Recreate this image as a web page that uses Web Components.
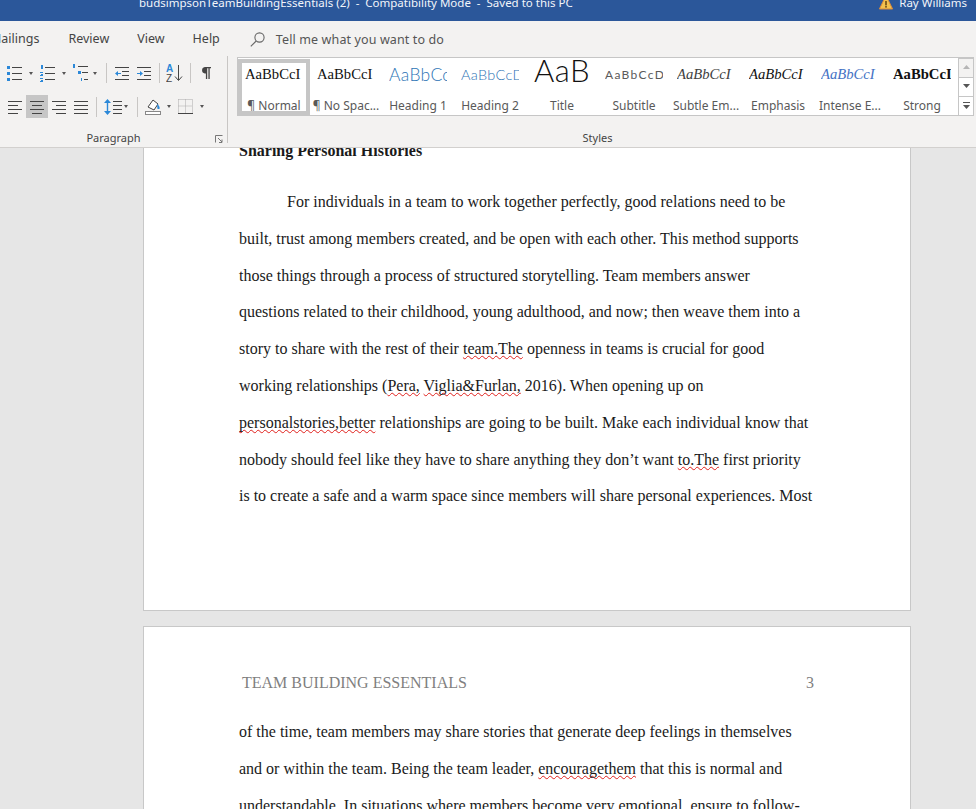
<!DOCTYPE html>
<html lang="en"><head><meta charset="utf-8"><title>Word</title>
<style>
html,body{margin:0;padding:0;height:100%;overflow:hidden;background:#e6e6e6}
word-app{font-family:"Noto Sans","Open Sans",sans-serif}
</style></head>
<body>
<template id="word-app-t"><style>
:host{display:flex;flex-direction:column;width:976px;height:809px;overflow:hidden}
</style><slot></slot></template>

<template id="title-bar-t"><style>
:host{display:flex;flex:none;height:21px;background:#2b579a;color:#f2f5fa;font-size:11.5px;line-height:16px;overflow:hidden;white-space:pre}
.t{margin:-5px 0 0 139px;flex:none}
.w{margin-left:auto;display:flex;flex:none;margin-top:-5px;padding-right:9px}
svg{margin:0 6px 0 0;flex:none}
</style><div class="t"><slot name="title"></slot></div><div class="w"><svg width="14" height="15" viewBox="0 0 14 15"><path d="M7 0.5 13.6 14H.4z" fill="#f2c14e" stroke="#d98a3a"/><rect x="6.2" y="6" width="1.6" height="4.4" fill="#6b4a12"/><rect x="6.2" y="11" width="1.6" height="1.6" fill="#6b4a12"/></svg><slot name="user"></slot></div></template>

<template id="ribbon-tabs-t"><style>
:host{display:flex;flex:none;height:35px;align-items:center;background:#f3f2f1;color:#444;font-size:12.5px;white-space:nowrap;overflow:hidden}
</style><slot></slot></template>

<template id="ribbon-tab-t"><style>
:host{display:block;flex:none;line-height:18px;padding-top:1px}
</style><slot></slot></template>

<template id="search-box-t"><style>
:host{display:flex;align-items:center;flex:none;color:#555;letter-spacing:.12px;padding-top:1px}
svg{margin-right:11px}
</style><svg width="15" height="15" viewBox="0 0 15 15" fill="none" stroke="#666" stroke-width="1.1"><circle cx="9.5" cy="5.5" r="4.6"/><path d="M6.2 9 .8 14.4"/></svg><slot></slot></template>

<template id="ribbon-bar-t"><style>
:host{display:flex;flex:none;height:91px;background:#f3f2f1;border-bottom:1px solid #d2d0ce;overflow:hidden}
</style><slot></slot></template>

<template id="paragraph-group-t"><style>
:host{display:flex;flex-direction:column;flex:none;width:227px;height:87px;padding-top:8px;box-sizing:content-box;border-right:1px solid #c8c6c4;height:79px;margin-bottom:4px;position:relative}
.r{display:flex;align-items:center}
.a{height:18px;padding-left:7px}.b{height:23px;margin-top:13px;padding-left:8px}
.l{display:flex;justify-content:center;margin-top:12px;font-size:11px;line-height:16px;color:#444;padding-right:24px;padding-left:24px;position:relative;height:16px;box-sizing:border-box;margin-bottom:-12px}
dialog-launcher{position:absolute;right:4px;top:5px}
</style><div class="r a"><slot name="a"></slot></div><div class="r b"><slot name="b"></slot></div><div class="l"><slot name="label"></slot><dialog-launcher></dialog-launcher></div></template>

<template id="dialog-launcher-t"><style>:host{display:block;width:8px;height:8px}svg{display:block}</style><svg width="8" height="8" viewBox="0 0 8 8" fill="none" stroke="#777"><path d="M.5 7.5V.5h7M3 3l4 4M7 4.5v3h-3"/></svg></template>

<template id="ribbon-tool-t"><style>
:host{display:flex;align-items:center;flex:none}
svg{display:block;flex:none}
:host([on]){background:#c6c6c6;width:22px;height:23px;justify-content:center}
.c{width:0;height:0;border:2.5px solid transparent;border-top:3px solid #555;border-bottom:0;flex:none}
</style><span id="i" style="display:contents"></span></template>

<template id="ribbon-sep-t"><style>:host{display:block;flex:none;width:1px;background:#c8c6c4}</style></template>

<template id="styles-group-t"><style>
:host{display:flex;flex-direction:column;flex:1;min-width:0;padding:1px 2px 0 9px}
.l{display:flex;justify-content:center;margin-top:14px;font-size:11px;line-height:16px;color:#444;padding-right:16px}
.g{display:flex;height:59px;background:#fff;border:1px solid #c6c6c6;box-sizing:border-box;padding-left:0}
.s{margin-left:auto;width:15px;display:flex;flex-direction:column;flex:none}
</style><div class="g"><slot name="tile"></slot><div class="s"><slot name="scroll"></slot></div></div><div class="l"><slot name="label"></slot></div></template>

<template id="style-tile-t"><style>
:host{display:flex;flex-direction:column;align-items:center;flex:none;width:72px;height:56px;box-sizing:border-box;margin-top:1px;overflow:hidden}
:host([selected]){border:4px solid #c6c6c6}
.p{width:58px;height:30px;overflow:hidden;white-space:nowrap;flex:none;display:flex;align-items:center;color:#111;font-family:"Liberation Serif",serif;font-size:14.67px;padding-top:1px;box-sizing:border-box}
:host([selected]) .p{margin-top:-4px}
.n{font-size:12px;line-height:16px;color:#595959;white-space:nowrap;margin-top:9px}
:host([selected]) .n{margin-top:9px}
::slotted(*){display:block}
</style><div class="p" part="p"><slot name="p"></slot></div><div class="n"><slot></slot></div></template>

<template id="gallery-scroll-t"><style>
:host{display:flex;flex:1;align-items:center;justify-content:center;border-left:1px solid #c6c6c6;background:#fff}
:host([disabled]){background:#f3f2f1}
:host(:not(:first-child)){border-top:1px solid #c6c6c6}
svg{display:block}
</style><span id="i" style="display:contents"></span></template>

<template id="doc-area-t"><style>
:host{display:flex;flex-direction:column;flex:1;min-height:0;overflow:hidden;background:#e6e6e6;padding-left:143px}
</style><slot></slot></template>

<template id="doc-page-t"><style>
:host{display:block;flex:none;box-sizing:border-box;width:768px;background:#fff;border:1px solid #c8c8c8;color:#1a1a1a;font:16px/36.8px "Liberation Serif",serif;padding-left:95px}
:host([first]){margin-top:-15px;padding-bottom:95px;border-top:0}
:host([second]){margin-top:15px;padding-top:38px}
</style><slot></slot></template>

<template id="doc-line-t"><style>
:host{display:block;white-space:nowrap;height:36.8px}
:host([h]){font-weight:700;margin-bottom:14.2px}
:host([i]){padding-left:48px}
</style><slot></slot></template>

<template id="page-head-t"><style>
:host{display:flex;justify-content:space-between;width:572px;margin-left:3px;color:#7f7f7f;line-height:36.8px;margin-bottom:12px}
</style><slot></slot></template>

<template id="spell-err-t"><style>
:host{display:inline;text-decoration:underline wavy #e0201c 1px;text-decoration-skip-ink:none;text-underline-offset:1px}
</style><slot></slot></template>

<word-app>
  <title-bar><span slot="title">budsimpsonTeamBuildingEssentials (2)  -  Compatibility Mode  -  Saved to this PC</span><span slot="user">Ray Williams</span></title-bar>
  <ribbon-tabs>
    <ribbon-tab style="margin-left:-10px">Mailings</ribbon-tab>
    <ribbon-tab style="margin-left:29px">Review</ribbon-tab>
    <ribbon-tab style="margin-left:28px">View</ribbon-tab>
    <ribbon-tab style="margin-left:28px">Help</ribbon-tab>
    <search-box style="margin-left:30px">Tell me what you want to do</search-box>
  </ribbon-tabs>
  <ribbon-bar>
    <paragraph-group>
      <ribbon-tool slot="a" icon="bullets" caret="7"></ribbon-tool>
      <ribbon-tool slot="a" icon="numbers" caret="7" style="margin-left:7px"></ribbon-tool>
      <ribbon-tool slot="a" icon="multi" caret="5" style="margin-left:7px"></ribbon-tool>
      <ribbon-sep slot="a" style="margin-left:9px;height:20px"></ribbon-sep>
      <ribbon-tool slot="a" icon="outdent" style="margin-left:8px"></ribbon-tool>
      <ribbon-tool slot="a" icon="indent" style="margin-left:8px"></ribbon-tool>
      <ribbon-sep slot="a" style="margin-left:8px;height:20px"></ribbon-sep>
      <ribbon-tool slot="a" icon="sort" style="margin-left:6px"></ribbon-tool>
      <ribbon-sep slot="a" style="margin-left:7px;height:20px"></ribbon-sep>
      <ribbon-tool slot="a" icon="pilcrow" style="margin-left:10px"></ribbon-tool>

      <ribbon-tool slot="b" icon="left"></ribbon-tool>
      <ribbon-tool slot="b" icon="center" on style="margin-left:4px"></ribbon-tool>
      <ribbon-tool slot="b" icon="right" style="margin-left:4px"></ribbon-tool>
      <ribbon-tool slot="b" icon="justify" style="margin-left:8px"></ribbon-tool>
      <ribbon-sep slot="b" style="margin-left:8px;height:20px"></ribbon-sep>
      <ribbon-tool slot="b" icon="spacing" caret="2" style="margin-left:7px"></ribbon-tool>
      <ribbon-sep slot="b" style="margin-left:9px;height:20px"></ribbon-sep>
      <ribbon-tool slot="b" icon="shade" caret="6" style="margin-left:7px"></ribbon-tool>
      <ribbon-tool slot="b" icon="borders" caret="7" style="margin-left:7px"></ribbon-tool>
      <span slot="label">Paragraph</span>
    </paragraph-group>
    <styles-group>
      <style-tile slot="tile" selected><span slot="p">AaBbCcI</span>¶ Normal</style-tile>
      <style-tile slot="tile"><span slot="p">AaBbCcI</span>¶ No Spac...</style-tile>
      <style-tile slot="tile"><span slot="p" style="font:300 17.5px Lato,sans-serif;color:#2e74b5;letter-spacing:.3px">AaBbCcD</span>Heading 1</style-tile>
      <style-tile slot="tile"><span slot="p" style="font:300 14.5px Lato,sans-serif;color:#2e74b5;letter-spacing:.3px">AaBbCcDd</span>Heading 2</style-tile>
      <style-tile slot="tile"><span slot="p" style="font:300 31px/30px Lato,sans-serif;color:#111;padding-left:1px;margin-top:-10px;letter-spacing:.5px">AaB</span>Title</style-tile>
      <style-tile slot="tile"><span slot="p" style="font:400 12px Lato,sans-serif;color:#5a5a5a;letter-spacing:1.3px">AaBbCcD</span>Subtitle</style-tile>
      <style-tile slot="tile"><span slot="p" style="font-style:italic;color:#404040">AaBbCcI</span>Subtle Em...</style-tile>
      <style-tile slot="tile"><span slot="p" style="font-style:italic;color:#111">AaBbCcI</span>Emphasis</style-tile>
      <style-tile slot="tile"><span slot="p" style="font-style:italic;color:#4472c4">AaBbCcI</span>Intense E...</style-tile>
      <style-tile slot="tile"><span slot="p" style="font-weight:700;color:#111">AaBbCcI</span>Strong</style-tile>
      <gallery-scroll slot="scroll" dir="up" disabled></gallery-scroll>
      <gallery-scroll slot="scroll" dir="down"></gallery-scroll>
      <gallery-scroll slot="scroll" dir="more"></gallery-scroll>
      <span slot="label">Styles</span>
    </styles-group>
  </ribbon-bar>
  <doc-area>
    <doc-page first>
      <doc-line h>Sharing Personal Histories</doc-line>
      <doc-line i>For individuals in a team to work together perfectly, good relations need to be</doc-line>
      <doc-line>built, trust among members created, and be open with each other. This method supports</doc-line>
      <doc-line>those things through a process of structured storytelling. Team members answer</doc-line>
      <doc-line>questions related to their childhood, young adulthood, and now; then weave them into a</doc-line>
      <doc-line>story to share with the rest of their <spell-err>team.The</spell-err> openness in teams is crucial for good</doc-line>
      <doc-line>working relationships (<spell-err>Pera,</spell-err> <spell-err>Viglia&amp;Furlan,</spell-err> 2016). When opening up on</doc-line>
      <doc-line><spell-err>personalstories,better</spell-err> relationships are going to be built. Make each individual know that</doc-line>
      <doc-line>nobody should feel like they have to share anything they don’t want <spell-err>to.The</spell-err> first priority</doc-line>
      <doc-line>is to create a safe and a warm space since members will share personal experiences. Most</doc-line>
    </doc-page>
    <doc-page second>
      <page-head><span>TEAM BUILDING ESSENTIALS</span><span>3</span></page-head>
      <doc-line>of the time, team members may share stories that generate deep feelings in themselves</doc-line>
      <doc-line>and or within the team. Being the team leader, <spell-err>encouragethem</spell-err> that this is normal and</doc-line>
      <doc-line>understandable. In situations where members become very emotional, ensure to follow-</doc-line>
    </doc-page>
  </doc-area>
</word-app>

<script>
const D='#444',B='#2b88d8';
const lines=(ys,x1,x2,c=D)=>ys.map(y=>`<rect x="${x1}" y="${y}" width="${x2-x1}" height="1" fill="${c}"/>`).join('');
const sq=(x,y,w,h,c=B)=>`<rect x="${x}" y="${y}" width="${w}" height="${h}" fill="${c}"/>`;
const ICONS={
 bullets:[15,18,sq(0,2,3,3)+sq(0,8,3,3)+sq(0,14,3,3)+lines([3,9,15],5,15)],
 numbers:[15,18,sq(1,1,2,4)+sq(0,8,3,1)+sq(1,10,2,1)+sq(0,11,3,1)+sq(0,14,3,1)+sq(1,16,2,1)+sq(0,17,3,1)+lines([3,9,15],5,15)],
 multi:[15,18,sq(0,0,2,4)+sq(5,7,3,3)+sq(8,14,1,3)+lines([2],5,15)+lines([8],9,15)+lines([15],11,15)],
 outdent:[14,18,lines([3,15],0,14)+lines([7,11],7,14)+sq(1,9,5,1)+`<path d="M0 9.5 3 7v5z" fill="${B}"/>`],
 indent:[14,18,lines([3,15],0,14)+lines([7,11],7,14)+sq(0,9,5,1)+`<path d="M6 9.5 3 7v5z" fill="${B}"/>`],
 sort:[17,18,`<text x="0" y="8" font-family="Liberation Sans,sans-serif" font-size="10" font-weight="700" fill="${B}">A</text><text x="0" y="18" font-family="Liberation Sans,sans-serif" font-size="10" fill="${D}">Z</text>`+`<path d="M12.5 1v15M9 12.5l3.5 4 3.5-4" fill="none" stroke="${D}"/>`],
 pilcrow:[10,18,`<path d="M3.8 3H10v1.3H8.7V15H7.4V4.3H6.2V15H4.9V9.5H3.8a3.3 3.3 0 0 1 0-6.5z" fill="${D}"/>`],
 left:[14,14,lines([1,5,9,13],0,14).replace(/(y="5"[^>]*width=")14/,'$110').replace(/(y="13"[^>]*width=")14/,'$110')],
 center:[14,14,lines([1,9],0,14)+lines([5,13],2,12)],
 right:[14,14,lines([1,9],0,14)+lines([5,13],4,14)],
 justify:[14,14,lines([1,5,9,13],0,14)],
 spacing:[18,18,lines([3,7,11,15],9,18)+`<path d="M3.5 1 7 5H4.2v8H7l-3.500 4L0 13h2.800V5H0z" fill="${B}"/>`],
 shade:[16,18,`<path d="M3 9 8 2l5 4-4 6z" fill="#fff" stroke="${D}"/><path d="M12 6c2 1 3 3 2.500 5h-2z" fill="${B}"/><rect x=".5" y="13.500" width="15" height="3" fill="#fff" stroke="#888"/>`],
 borders:[15,18,`<path d="M.5 1.500h14v13M.5 1.500v13M7.500 1.500v13M.5 8h14" fill="none" stroke="#aaa" stroke-dasharray="1 1"/>`+lines([15],0,15)]
};
function svg(n){const [w,h,b]=ICONS[n];return `<svg width="${w}" height="${h}" viewBox="0 0 ${w} ${h}" shape-rendering="auto">${b}</svg>`}
function base(tag,init){customElements.define(tag,class extends HTMLElement{
  constructor(){super();const r=this.attachShadow({mode:'open'});r.appendChild(document.getElementById(tag+'-t').content.cloneNode(true));}
  connectedCallback(){init&&init.call(this,this.shadowRoot)}
})}
['word-app','title-bar','ribbon-tabs','ribbon-tab','search-box','ribbon-bar','paragraph-group','dialog-launcher','ribbon-sep','styles-group','style-tile','doc-area','doc-page','doc-line','page-head','spell-err'].forEach(t=>base(t));
base('ribbon-tool',function(r){const c=this.getAttribute('caret');r.getElementById('i').innerHTML=svg(this.getAttribute('icon'))+(c?`<span class="c" style="margin-left:${c}px"></span>`:'')});
base('gallery-scroll',function(r){const d=this.getAttribute('dir');const col=d==='up'?'#b5b5b5':'#555';
 const s={up:`<path d="M1 5 4.500 1 8 5z" fill="${col}"/>`,down:`<path d="M1 1l3.500 4L8 1z" fill="${col}"/>`,more:`<rect x="1" y="0" width="7" height="1" fill="${col}"/><path d="M1 3l3.500 4L8 3z" fill="${col}"/>`}[d];
 r.getElementById('i').innerHTML=`<svg width="9" height="8" viewBox="0 0 9 8">${s}</svg>`});
</script>
</body></html>
